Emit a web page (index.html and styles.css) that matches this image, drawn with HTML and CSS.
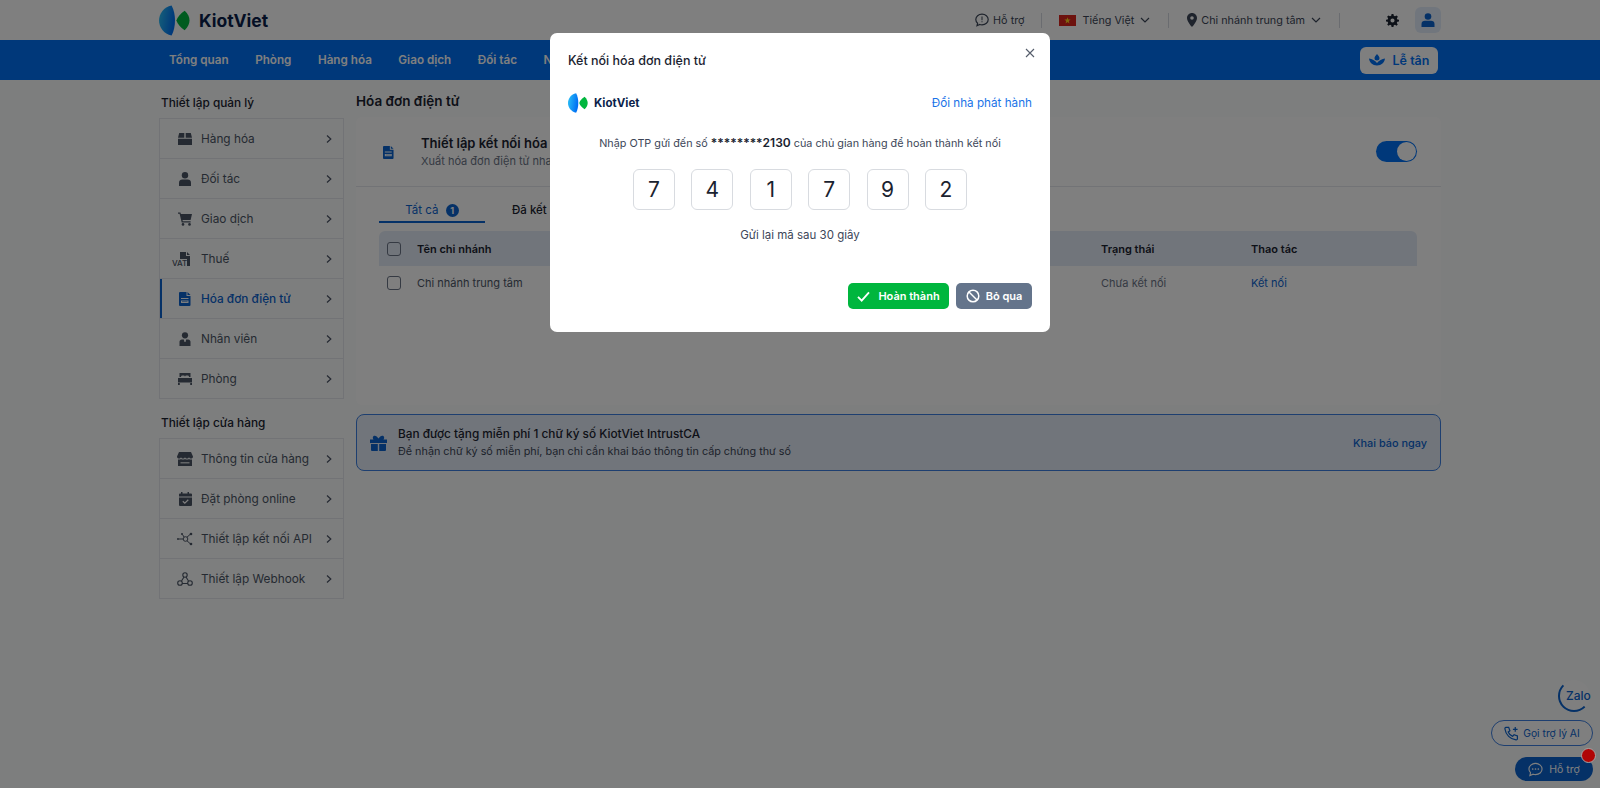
FILE: index.html
```html
<!DOCTYPE html>
<html lang="vi">
<head>
    <meta charset="UTF-8">
    <title>Hóa đơn điện tử</title>
    <link rel="stylesheet" href="styles.css">
</head>
<body>
    <svg class="sprite" width="0" height="0">
        <defs>
            <linearGradient id="lensBlue" x1="0" y1="0" x2="1" y2="0.3">
                <stop offset="0" stop-color="#2ec4f5"/>
                <stop offset="1" stop-color="#0070f4"/>
            </linearGradient>
            <symbol id="logo" viewBox="0 0 32 32">
                <path d="M13 .5 C5 2 0 9 0 16 C0 23 5 30 13 31.500 C15.500 27 16.500 21 16.500 16 C16.500 11 15.500 5 13 .5Z" fill="url(#lensBlue)"/>
                <path d="M26.500 6 C22 9 19 12.500 18 16 C19 19.500 22 23 26.500 26 C30 23 31.500 19 31.500 16 C31.500 13 30 9 26.500 6Z" fill="#00b63e"/>
            </symbol>
            <symbol id="chev" viewBox="0 0 10 10">
                <path d="M3 1.500 L6.800 5 L3 8.500" fill="none" stroke="currentColor" stroke-width="1.200"/>
            </symbol>
            <symbol id="down" viewBox="0 0 10 10">
                <path d="M1 3 L5 7 L9 3" fill="none" stroke="currentColor" stroke-width="1.200"/>
            </symbol>
            <symbol id="doc" viewBox="0 0 12 14">
                <path d="M1 0 H7.500 V4 H11.500 V13 Q11.500 14 10.500 14 H1 Q0 14 0 13 V1 Q0 0 1 0Z M8.500 0 L11.500 3 H8.500Z M2 6 V7 H9.500 V6Z M2 8.500 V11 H9.500 V8.500Z M3 9.500 H8.500 V10 H3Z" fill="currentColor" fill-rule="evenodd"/>
            </symbol>
        </defs>
    </svg>

    <header class="topbar">
        <div class="topbar-inner">
            <div class="brand">
                <svg class="brand-icon"><use href="#logo"/></svg>
                <span class="brand-name">KiotViet</span>
            </div>
            <div class="top-actions">
                <span class="top-item">
                    <svg class="ic14" viewBox="0 0 14 14"><path d="M7 1.200 C3.500 1.200 .8 3.500 .8 6.500 C.8 8 1.500 9.300 2.600 10.200 L2 12.800 L4.800 11.500 C5.500 11.700 6.200 11.800 7 11.800 C10.500 11.800 13.200 9.500 13.200 6.500 C13.200 3.500 10.500 1.200 7 1.200Z" fill="none" stroke="currentColor" stroke-width="1.200"/><path d="M6.500 3.500 H7.500 V7.200 H6.500Z M6.500 8.200 H7.500 V9.300 H6.500Z" fill="currentColor"/></svg>
                    Hỗ trợ
                </span>
                <i class="top-sep sep-a"></i>
                <span class="top-item">
                    <span class="flag"><svg viewBox="0 0 10 10" width="7" height="7"><path d="M5 .5 L6.100 3.700 H9.500 L6.800 5.800 L7.800 9.200 L5 7.200 L2.200 9.200 L3.200 5.800 L.5 3.700 H3.900Z" fill="#ffd21f"/></svg></span>
                    <span class="lang">Tiếng Việt</span>
                    <svg class="ic10 down-gap"><use href="#down"/></svg>
                </span>
                <i class="top-sep sep-b"></i>
                <span class="top-item">
                    <svg class="pin" viewBox="0 0 10 14"><path d="M5 0 C2.200 0 0 2.200 0 5 C0 8 3.500 12.500 5 14 C6.500 12.500 10 8 10 5 C10 2.200 7.800 0 5 0Z M5 3.200 A1.800 1.800 0 1 1 5 6.800 A1.800 1.800 0 1 1 5 3.200Z" fill="currentColor" fill-rule="evenodd"/></svg>
                    <span class="branch">Chi nhánh trung tâm</span>
                    <svg class="ic10 down-gap"><use href="#down"/></svg>
                </span>
                <i class="top-sep sep-c"></i>
                <svg class="gear" viewBox="0 0 14 14"><path d="M6 0 H8 L8.400 1.900 L9.700 2.500 L11.400 1.500 L12.800 3 L11.700 4.600 L12.200 5.900 L14 6.200 V8 L12.200 8.400 L11.600 9.700 L12.700 11.300 L11.300 12.700 L9.700 11.600 L8.400 12.200 L8 14 H6 L5.600 12.200 L4.300 11.600 L2.700 12.700 L1.300 11.300 L2.400 9.700 L1.800 8.400 L0 8 V6.200 L1.800 5.900 L2.300 4.600 L1.200 3 L2.600 1.500 L4.300 2.500 L5.600 1.900Z M7 4.800 A2.200 2.200 0 1 0 7 9.200 A2.200 2.200 0 1 0 7 4.800Z" fill="#1b2330" fill-rule="evenodd"/></svg>
                <span class="avatar">
                    <svg viewBox="0 0 14 14" width="14" height="14"><circle cx="7" cy="3.500" r="3.300" fill="currentColor"/><path d="M0.500 14 V11 C.5 9 2 7.800 4 7.800 H10 C12 7.800 13.500 9 13.500 11 V14Z" fill="currentColor"/></svg>
                </span>
            </div>
        </div>
    </header>

    <nav class="navbar">
        <div class="nav-inner">
            <a class="nav-link">Tổng quan</a>
            <a class="nav-link">Phòng</a>
            <a class="nav-link">Hàng hóa</a>
            <a class="nav-link">Giao dịch</a>
            <a class="nav-link">Đối tác</a>
            <a class="nav-link">N</a>
            <button class="reception">
                <svg viewBox="0 0 16 12" width="16" height="12"><path d="M8 0 C9.500 1.800 10.500 3 10.500 4.300 C10.500 5.600 9.400 6.600 8 6.600 C6.600 6.600 5.500 5.600 5.500 4.300 C5.500 3 6.500 1.800 8 0Z M0 4.500 C3 4.800 6 6.500 8 9 C10 6.500 13 4.800 16 4.500 C15.500 8.500 12.500 11.500 8 11.500 C3.500 11.500 .5 8.500 0 4.500Z" fill="currentColor"/></svg>
                Lễ tân
            </button>
        </div>
    </nav>

    <main class="page">
        <aside class="side">
            <h3 class="side-title">Thiết lập quản lý</h3>
            <ul class="side-list">
                <li class="side-row">
                    <svg class="side-ic" viewBox="0 0 14 14"><path d="M0 5.800 L1.200 1 H6.300 V5.800Z M7.700 1 H12.800 L14 5.800 H7.700Z M0 6.800 H14 V13 H0Z" fill="currentColor"/></svg>
                    <span>Hàng hóa</span><svg class="side-chev"><use href="#chev"/></svg>
                </li>
                <li class="side-row">
                    <svg class="side-ic" viewBox="0 0 14 14"><circle cx="7" cy="3.300" r="3.200" fill="currentColor"/><path d="M1 14 V10.500 C1 8.500 2.500 7.400 4.300 7.400 H9.700 C11.500 7.400 13 8.500 13 10.500 V14Z" fill="currentColor"/></svg>
                    <span>Đối tác</span><svg class="side-chev"><use href="#chev"/></svg>
                </li>
                <li class="side-row">
                    <svg class="side-ic" viewBox="0 0 14 14"><path d="M0 .5 H2.400 L2.900 2 H14 L12.600 8 H4.500 L4.800 9.200 H12.600 V10.400 H3.700 L1.600 1.700 H0Z" fill="currentColor"/><circle cx="5" cy="12.400" r="1.300" fill="currentColor"/><circle cx="11.500" cy="12.400" r="1.300" fill="currentColor"/></svg>
                    <span>Giao dịch</span><svg class="side-chev"><use href="#chev"/></svg>
                </li>
                <li class="side-row">
                    <span class="vat-ic">
                        <svg viewBox="0 0 10 14" width="10" height="14"><path d="M0 0 H6 V4 H10 V14 H0Z M7 0 L10 3 H7Z" fill="currentColor"/></svg>
                        <b class="vat-text">VAT</b>
                    </span>
                    <span>Thuế</span><svg class="side-chev"><use href="#chev"/></svg>
                </li>
                <li class="side-row is-active">
                    <svg class="side-ic"><use href="#doc"/></svg>
                    <span>Hóa đơn điện tử</span><svg class="side-chev"><use href="#chev"/></svg>
                </li>
                <li class="side-row">
                    <svg class="side-ic" viewBox="0 0 14 14"><circle cx="7" cy="3.300" r="3.100" fill="currentColor"/><path d="M1.500 14 V9.800 C1.500 8.500 2.500 7.400 4 7.400 H5.800 L6.500 10 H7.500 L8.200 7.400 H10 C11.500 7.400 12.500 8.500 12.500 9.800 V14Z" fill="currentColor"/></svg>
                    <span>Nhân viên</span><svg class="side-chev"><use href="#chev"/></svg>
                </li>
                <li class="side-row">
                    <svg class="side-ic" viewBox="0 0 14 14"><path d="M1.500 1 H12.500 V5 H11 C11 4 10.500 3.500 9.500 3.500 H8.300 C7.600 3.500 7 4 7 5 C7 4 6.400 3.500 5.700 3.500 H4.500 C3.500 3.500 3 4 3 5 H1.500Z M0 6 H14 V10.500 H0Z M0 11 H1.800 V13 H0Z M12.200 11 H14 V13 H12.200Z" fill="currentColor"/></svg>
                    <span>Phòng</span><svg class="side-chev"><use href="#chev"/></svg>
                </li>
            </ul>
            <h3 class="side-title second">Thiết lập cửa hàng</h3>
            <ul class="side-list">
                <li class="side-row">
                    <svg class="side-ic wide" viewBox="0 0 16 14"><path d="M2 0 H14 L16 4.500 C16 6 15 6.600 14 6.600 C13 6.600 12.300 6 12 5.200 C11.700 6 10.900 6.600 10 6.600 C9.100 6.600 8.300 6 8 5.200 C7.700 6 6.900 6.600 6 6.600 C5.100 6.600 4.300 6 4 5.200 C3.700 6 3 6.600 2 6.600 C1 6.600 0 6 0 4.500Z M1 7.500 C2.300 7.800 3.300 7.500 4 7 C5 7.800 7 7.800 8 7 C9 7.800 11 7.800 12 7 C12.700 7.500 13.700 7.800 15 7.500 V14 H1Z" fill="currentColor"/><path d="M3.500 10 H12.500 V11.500 H3.500Z" fill="#fff" fill-opacity=".7"/></svg>
                    <span>Thông tin cửa hàng</span><svg class="side-chev"><use href="#chev"/></svg>
                </li>
                <li class="side-row">
                    <svg class="side-ic" viewBox="0 0 14 14"><path d="M3 0 H4.500 V1.500 H9.500 V0 H11 V1.500 H13 Q14 1.500 14 2.500 V4.500 H1 V2.500 Q1 1.500 2 1.500 H3Z M1 5.500 H14 V13 Q14 14 13 14 H2 Q1 14 1 13Z" fill="currentColor"/><path d="M4.800 9.300 L6.800 11.200 L10.300 7.800" fill="none" stroke="#fff" stroke-width="1.200"/></svg>
                    <span>Đặt phòng online</span><svg class="side-chev"><use href="#chev"/></svg>
                </li>
                <li class="side-row">
                    <svg class="side-ic wide" viewBox="0 0 16 14"><g fill="none" stroke="currentColor" stroke-width="1"><circle cx="8.500" cy="7" r="2.300"/><path d="M2 7 H6 M10 5.200 L13 2.500 M10 8.800 L13 11.500 M7 5 L5.500 2.500"/></g><g fill="currentColor"><circle cx="1" cy="7" r="1"/><circle cx="14" cy="2" r="1.300"/><circle cx="14" cy="12" r="1.300"/><circle cx="5" cy="2" r="1"/></g></svg>
                    <span>Thiết lập kết nối API</span><svg class="side-chev"><use href="#chev"/></svg>
                </li>
                <li class="side-row">
                    <svg class="side-ic wide" viewBox="0 0 16 14"><g fill="none" stroke="currentColor" stroke-width="1.100"><circle cx="8" cy="3" r="2.200"/><circle cx="3" cy="11" r="2.300"/><circle cx="13" cy="11" r="2.300"/><path d="M7 5 L4.500 9 M9 5 L11.500 9 M5 11.500 H11"/></g></svg>
                    <span>Thiết lập Webhook</span><svg class="side-chev"><use href="#chev"/></svg>
                </li>
            </ul>
        </aside>

        <section class="content">
            <h2 class="content-title">Hóa đơn điện tử</h2>
            <div class="card">
                <div class="card-head">
                    <svg class="card-ic"><use href="#doc"/></svg>
                    <div class="card-text">
                        <div class="card-name">Thiết lập kết nối hóa đ</div>
                        <div class="card-sub">Xuất hóa đơn điện tử nha</div>
                    </div>
                    <span class="toggle"><i class="knob"></i></span>
                </div>
                <div class="card-body">
                    <div class="tabs">
                        <span class="tab is-current">Tất cả <b class="badge">1</b></span>
                        <span class="tab">Đã kết</span>
                    </div>
                    <div class="grid-row grid-head">
                        <span class="check"></span>
                        <span class="col-name">Tên chi nhánh</span>
                        <span class="col-status">Trạng thái</span>
                        <span>Thao tác</span>
                    </div>
                    <div class="grid-row">
                        <span class="check"></span>
                        <span class="col-name">Chi nhánh trung tâm</span>
                        <span class="col-status muted">Chưa kết nối</span>
                        <a class="link">Kết nối</a>
                    </div>
                </div>
            </div>
            <div class="promo">
                <svg class="promo-ic" viewBox="0 0 17 16"><path d="M0 4.500 H3.500 C2.500 3.500 2.500 1.500 4 .8 C5.500 .2 7.200 1.500 8.500 3.500 C9.800 1.500 11.500 .2 13 .8 C14.500 1.500 14.500 3.500 13.500 4.500 H17 V8 H0Z M1 9 H7.800 V16 H2 Q1 16 1 15Z M9.200 9 H16 V15 Q16 16 15 16 H9.200Z" fill="currentColor"/></svg>
                <div class="promo-text">
                    <div class="promo-name">Bạn được tặng miễn phí 1 chữ ký số KiotViet IntrustCA</div>
                    <div class="promo-sub">Để nhận chữ ký số miễn phí, bạn chỉ cần khai báo thông tin cấp chứng thư số</div>
                </div>
                <a class="promo-link">Khai báo ngay</a>
            </div>
        </section>
    </main>

    <div class="floaters">
        <span class="zalo">Zalo</span>
        <span class="ai-pill">
            <svg viewBox="0 0 16 16" width="15" height="15"><path d="M2 1.500 H5 L6.300 5 L4.500 6.300 C5.300 8.300 7.200 10.200 9.300 11 L10.700 9.300 L14.300 10.700 V13.500 C14.300 14.300 13.600 15 12.800 14.800 C6.800 14.200 1.800 9.200 1 3.200 C.9 2.300 1.300 1.500 2 1.500Z" fill="none" stroke="currentColor" stroke-width="1.300"/><path d="M12 1 V6 M9.500 3.500 H14.500" stroke="currentColor" stroke-width="1.300"/></svg>
            Gọi trợ lý AI
        </span>
        <span class="help-pill">
            <svg viewBox="0 0 16 16" width="15" height="15"><path d="M8 1.500 C4 1.500 1 4.200 1 7.500 C1 9 1.600 10.300 2.700 11.300 L2 14.500 L5.500 13 C6.300 13.300 7.100 13.400 8 13.400 C12 13.400 15 10.800 15 7.500 C15 4.200 12 1.500 8 1.500Z" fill="none" stroke="currentColor" stroke-width="1.200"/><g fill="currentColor"><circle cx="5" cy="7.500" r=".9"/><circle cx="8" cy="7.500" r=".9"/><circle cx="11" cy="7.500" r=".9"/></g></svg>
            Hỗ trợ
            <i class="red-dot"></i>
        </span>
    </div>

    <!-- lop phu va hop thoai OTP -->
    <div class="overlay">
        <div class="modal">
            <button class="modal-close"><svg viewBox="0 0 10 10" width="10" height="10"><path d="M1 1 L9 9 M9 1 L1 9" stroke="currentColor" stroke-width="1.100"/></svg></button>
            <h3 class="modal-title">Kết nối hóa đơn điện tử</h3>
            <div class="modal-brand">
                <svg class="modal-logo"><use href="#logo"/></svg>
                <span class="modal-brand-name">KiotViet</span>
                <a class="modal-switch">Đổi nhà phát hành</a>
            </div>
            <p class="otp-note">Nhập OTP gửi đến số <b>********2130</b> của chủ gian hàng để hoàn thành kết nối</p>
            <div class="otp-row">
                <span class="otp-box">7</span>
                <span class="otp-box">4</span>
                <span class="otp-box">1</span>
                <span class="otp-box">7</span>
                <span class="otp-box">9</span>
                <span class="otp-box">2</span>
            </div>
            <p class="otp-resend">Gửi lại mã sau 30 giây</p>
            <div class="modal-actions">
                <button class="btn btn-ok">
                    <svg viewBox="0 0 14 12" width="13" height="11"><path d="M1 6.500 L5 10.500 L13 1.500" fill="none" stroke="currentColor" stroke-width="2"/></svg>
                    Hoàn thành
                </button>
                <button class="btn btn-skip">
                    <svg viewBox="0 0 14 14" width="14" height="14"><circle cx="7" cy="7" r="5.800" fill="none" stroke="currentColor" stroke-width="1.500"/><path d="M3 3 L11 11" stroke="currentColor" stroke-width="1.500"/></svg>
                    Bỏ qua
                </button>
            </div>
        </div>
    </div>
</body>
</html>
```

FILE: styles.css
```css
* {
    box-sizing: border-box;
}
html, body {
    height: 100%;
}
body {
    margin: 0;
    font-family: Inter, "Noto Sans", sans-serif;
    font-size: 12px;
    color: #1b2330;
    background-color: #fafcfc;
    overflow: hidden;
}
.sprite {
    position: absolute;
}
ul {
    list-style: none;
    margin: 0;
    padding: 0;
}
a {
    text-decoration: none;
}
button {
    font-family: inherit;
    border: none;
}

/* topbar */
.topbar {
    height: 40px;
    background-color: #fff;
}
.topbar-inner {
    height: 40px;
    margin: 0 159px;
    display: flex;
    align-items: center;
    justify-content: space-between;
}
.brand {
    display: flex;
    align-items: center;
}
.brand-icon {
    width: 31px;
    height: 31px;
}
.brand-name {
    margin-left: 9px;
    font-size: 17.500px;
    font-weight: 700;
    color: #0b1f4b;
}
.top-actions {
    display: flex;
    align-items: center;
}
.top-item {
    display: flex;
    align-items: center;
    gap: 4px;
    color: #3c4658;
    font-size: 10.800px;
}
.ic14 {
    width: 14px;
    height: 14px;
}
.ic10 {
    width: 10px;
    height: 10px;
}
.down-gap {
    margin-left: 2px;
}
.top-sep {
    width: 1px;
    height: 15px;
    background-color: #d5d9e0;
}
.sep-a {
    margin: 0 17px 0 16px;
}
.sep-b {
    margin: 0 18px;
}
.sep-c {
    margin: 0 46px 0 18px;
}
.flag {
    width: 17px;
    height: 11px;
    margin-right: 3px;
    background-color: #da251d;
    display: flex;
    align-items: center;
    justify-content: center;
}
.pin {
    width: 10px;
    height: 14px;
}
.gear {
    width: 13px;
    height: 13px;
    margin-right: 16px;
}
.avatar {
    width: 26px;
    height: 26px;
    border-radius: 6px;
    background-color: #e3edfb;
    color: #0b63ce;
    display: flex;
    align-items: center;
    justify-content: center;
}

/* nav */
.navbar {
    height: 40px;
    background-color: #0070f4;
}
.nav-inner {
    height: 40px;
    margin: 0 162px 0 169px;
    display: flex;
    align-items: center;
    gap: 26.500px;
}
.nav-link {
    color: #fff;
    font-size: 11.700px;
    font-weight: 600;
    white-space: nowrap;
}
.reception {
    margin-left: auto;
    width: 78px;
    height: 27px;
    border-radius: 6px;
    background-color: #fff;
    color: #0070f4;
    font-size: 12.500px;
    font-weight: 600;
    display: flex;
    align-items: center;
    justify-content: center;
    gap: 8px;
}

/* page */
.page {
    margin: 0 159px;
    display: flex;
    gap: 12px;
}
.side {
    width: 185px;
    flex-shrink: 0;
}
.side-title {
    margin: 16px 0 7px 2px;
    font-size: 11.800px;
    line-height: 15px;
    font-weight: 500;
    color: #1b2330;
}
.side-title.second {
    margin-top: 17px;
}
.side-list {
    border: 1px solid #e4e7ec;
}
.side-row {
    height: 40px;
    display: flex;
    align-items: center;
    padding-left: 15px;
    border-bottom: 1px solid #e4e7ec;
    color: #4b5565;
    font-size: 11.800px;
}
.side-row:last-child {
    height: 39px;
    border-bottom: none;
}
.side-row.is-active {
    color: #0b63ce;
    font-weight: 500;
    box-shadow: inset 2px 0 0 #0b63ce;
}
.side-ic {
    width: 14px;
    height: 14px;
    margin: 0 9px 0 3px;
    flex-shrink: 0;
    color: #4b5565;
}
.side-ic.wide {
    width: 16px;
    margin: 0 8px 0 2px;
}
.is-active .side-ic {
    color: #0b63ce;
}
.vat-ic {
    position: relative;
    width: 18px;
    height: 14px;
    margin: 0 11px 0 -3px;
    text-align: right;
    color: #4b5565;
}
.vat-text {
    position: absolute;
    left: 0;
    bottom: -1px;
    font-size: 8px;
    line-height: 8px;
    font-weight: 500;
    background-color: #fafcfc;
}
.side-chev {
    width: 10px;
    height: 10px;
    margin-left: auto;
    margin-right: 9px;
    color: #4a5365;
}

/* content */
.content {
    flex-grow: 1;
    min-width: 0;
}
.content-title {
    margin: 13px 0 7px;
    font-size: 13.500px;
    line-height: 17px;
    font-weight: 600;
}
.card {
    height: 288px;
    background-color: #fff;
    border-radius: 6px;
}
.card-head {
    height: 70px;
    display: flex;
    align-items: center;
    padding: 0 24px 0 27px;
    border-bottom: 1px solid #e4e7ec;
}
.card-ic {
    width: 11px;
    height: 13px;
    margin-top: 2px;
    color: #0b63ce;
    flex-shrink: 0;
}
.card-text {
    margin-left: 27px;
    white-space: nowrap;
}
.card-name {
    font-size: 13px;
    line-height: 18px;
    font-weight: 600;
}
.card-sub {
    margin-top: 1px;
    font-size: 11px;
    line-height: 16px;
    color: #6b7486;
}
.toggle {
    margin-left: auto;
    width: 41px;
    height: 21px;
    padding: 1px;
    border-radius: 11px;
    background-color: #0070f4;
    display: flex;
    justify-content: flex-end;
}
.knob {
    width: 19px;
    height: 19px;
    border-radius: 50%;
    background-color: #fff;
}
.card-body {
    padding: 0 24px 0 23px;
}
.tabs {
    height: 36px;
    display: flex;
}
.tab {
    padding-top: 16px;
    font-size: 11.500px;
    font-weight: 500;
    white-space: nowrap;
}
.tab.is-current {
    width: 106px;
    height: 36px;
    text-align: center;
    color: #0b63ce;
    font-weight: 400;
    border-bottom: 2px solid #0b63ce;
    margin-right: 27px;
}
.badge {
    display: inline-block;
    width: 13px;
    height: 13px;
    margin-left: 4px;
    border-radius: 50%;
    background-color: #0b63ce;
    color: #fff;
    font-size: 9px;
    line-height: 13px;
    font-weight: 700;
}
.grid-row {
    height: 35px;
    display: flex;
    align-items: center;
    padding-left: 8px;
    font-size: 11px;
    color: #4b5565;
}
.grid-row + .grid-row {
    height: 34px;
}
.grid-head {
    margin-top: 8px;
    background-color: #e3ebf6;
    border-radius: 6px 6px 0 0;
    font-weight: 600;
    color: #1b2330;
}
.check {
    width: 14px;
    height: 14px;
    border: 1px solid #6b7486;
    border-radius: 3px;
    flex-shrink: 0;
}
.col-name {
    margin-left: 16px;
    width: 684px;
    flex-shrink: 0;
}
.col-status {
    width: 150px;
    flex-shrink: 0;
}
.muted {
    color: #6b7486;
}
.link {
    color: #0b63ce;
}
.promo {
    height: 57px;
    margin-top: 9px;
    display: flex;
    align-items: center;
    padding: 0 13px 0 13px;
    border: 1px solid #3d7fe0;
    border-radius: 8px;
    background-color: #e3ebf6;
}
.promo-ic {
    width: 17px;
    height: 16px;
    color: #0b63ce;
    flex-shrink: 0;
}
.promo-text {
    margin-left: 11px;
}
.promo-name {
    font-size: 11.800px;
    line-height: 17px;
    font-weight: 500;
}
.promo-sub {
    margin-top: 1px;
    font-size: 10.800px;
    line-height: 16px;
    color: #3c4658;
}
.promo-link {
    margin-left: auto;
    color: #0b63ce;
    font-size: 10.900px;
    font-weight: 500;
}

/* nut noi goc phai */
.floaters {
    position: absolute;
    right: 7px;
    bottom: 7px;
    display: flex;
    flex-direction: column;
    align-items: flex-end;
}
.zalo {
    width: 32px;
    height: 32px;
    margin-right: 3px;
    padding-left: 6px;
    border: 2px solid transparent;
    border-left-color: #0b63ce;
    border-bottom-color: #0b63ce;
    border-radius: 50%;
    background-color: #fff;
    color: #0b63ce;
    font-size: 12px;
    font-weight: 500;
    line-height: 28px;
    white-space: nowrap;
}
.ai-pill {
    margin-top: 8px;
    width: 102px;
    height: 26px;
    border: 1px solid #3d7fe0;
    border-radius: 13px;
    background-color: #fff;
    color: #0b63ce;
    font-size: 10.300px;
    display: flex;
    align-items: center;
    justify-content: center;
    gap: 4px;
}
.help-pill {
    position: relative;
    margin-top: 11px;
    width: 78px;
    height: 24px;
    border-radius: 12px;
    background-color: #0b63ce;
    color: #fff;
    font-size: 10.500px;
    display: flex;
    align-items: center;
    justify-content: center;
    gap: 6px;
}
.red-dot {
    position: absolute;
    z-index: 2;
    top: -9px;
    right: -3px;
    width: 15px;
    height: 15px;
    border-radius: 50%;
    border: 1px solid #a5a5a5;
    background-color: #b00505;
}

/* hop thoai */
.overlay {
    position: fixed;
    z-index: 1;
    inset: 0;
    background-color: rgba(0, 0, 0, 0.5);
    display: flex;
    justify-content: center;
    padding-top: 33px;
}
.modal {
    position: relative;
    width: 500px;
    height: 299px;
    padding: 19px 18px 0;
    background-color: #fff;
    border-radius: 7px;
    align-self: flex-start;
}
.modal-close {
    position: absolute;
    top: 15px;
    right: 15px;
    padding: 0;
    width: 10px;
    height: 10px;
    background: none;
    color: #555d6b;
    display: flex;
}
.modal-title {
    margin: 0;
    font-size: 12.500px;
    line-height: 18px;
    font-weight: 500;
    color: #1b2330;
}
.modal-brand {
    margin-top: 23px;
    height: 20px;
    display: flex;
    align-items: center;
}
.modal-logo {
    width: 20px;
    height: 20px;
}
.modal-brand-name {
    margin-left: 6px;
    font-size: 11.500px;
    font-weight: 700;
    color: #0b1f4b;
}
.modal-switch {
    margin-left: auto;
    color: #1a73e8;
    font-size: 11.700px;
}
.otp-note {
    margin: 22px 0 0;
    text-align: center;
    font-size: 10.800px;
    line-height: 16px;
    color: #3c4658;
}
.otp-note b {
    font-size: 12px;
    font-weight: 600;
    color: #1b2330;
}
.otp-row {
    margin-top: 17px;
    display: flex;
    justify-content: center;
    gap: 16.400px;
}
.otp-box {
    width: 42px;
    height: 41px;
    border: 1px solid #d8dbe0;
    border-radius: 6px;
    display: flex;
    align-items: center;
    justify-content: center;
    font-size: 21px;
    color: #1b2330;
}
.otp-resend {
    margin: 17px 0 0;
    text-align: center;
    font-size: 11.500px;
    line-height: 16px;
    color: #3c4658;
}
.modal-actions {
    margin-top: 40px;
    display: flex;
    justify-content: flex-end;
    gap: 7px;
}
.btn {
    height: 26px;
    border-radius: 5px;
    color: #fff;
    font-size: 11px;
    font-weight: 600;
    display: flex;
    align-items: center;
    justify-content: center;
    gap: 8px;
}
.btn-ok {
    width: 101px;
    background-color: #00b63e;
}
.btn-skip {
    width: 76px;
    gap: 6px;
    background-color: #64748b;
}
```
